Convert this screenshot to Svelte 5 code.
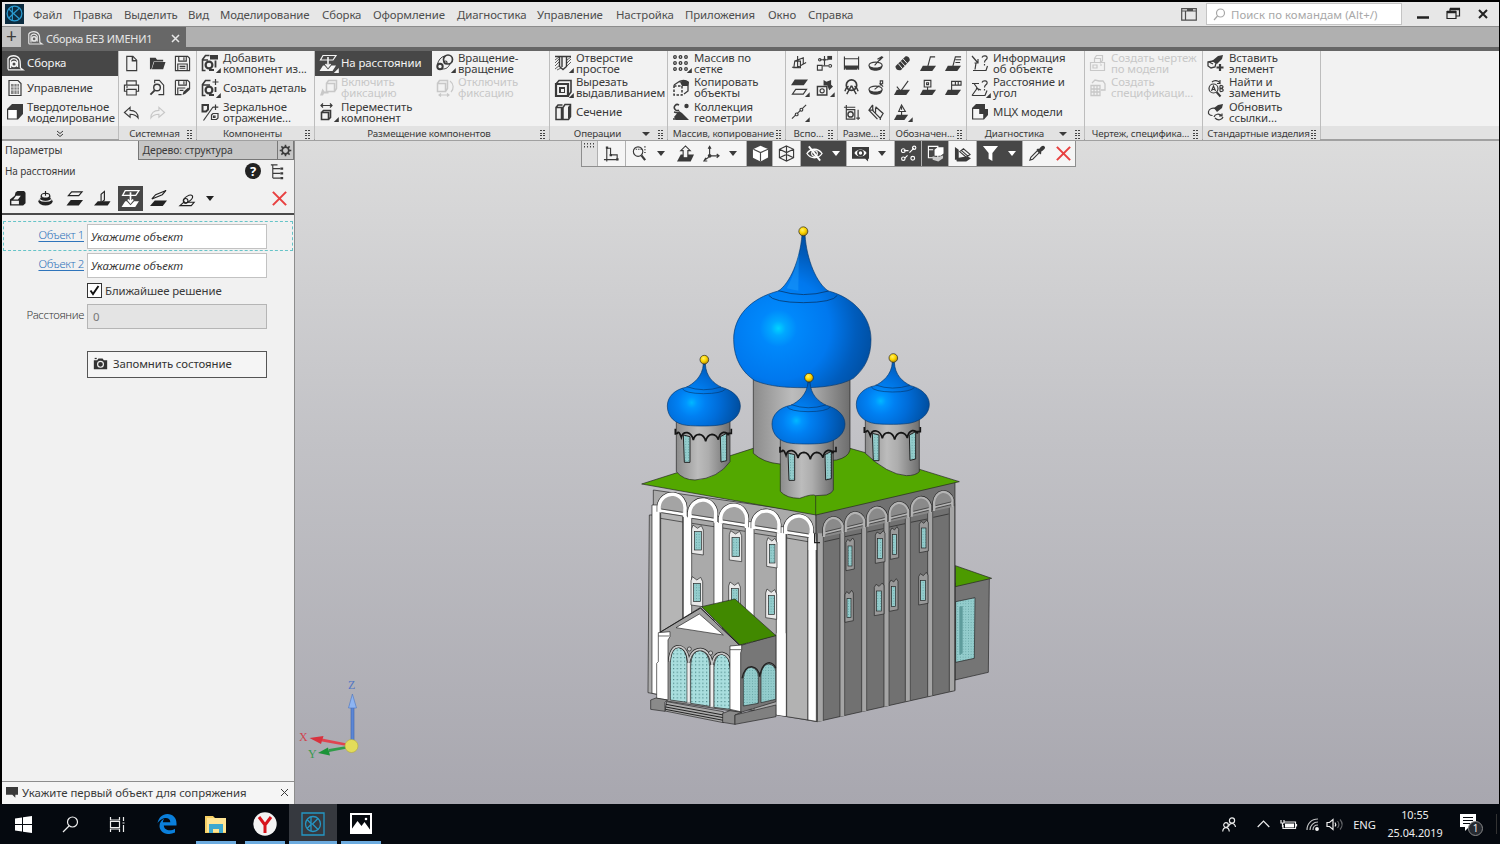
<script lang="ts">
	// толстая маленькая стрелка в углу иконки (есть вложенные команды)
	const more = '<path d="M19.8 14v5h-5z" fill="currentColor" stroke="none"/>';
	const f = 'fill="currentColor" stroke="none"';
	const distance = `<path d="M4 1.500h13L14 6H1.500z"/><path d="M9 3v9.500M6.500 10L9 13l2.500-3" stroke-width="1.600"/><path d="M4 11.500h1.500L9 15.500l3.500-4H17L13.500 17H.5z" ${f}/>`;

	const icons: Record<string, string> = {
		assembly: `<path d="M2 15.500V4.500C4 1 11 .5 13.500 5c1.500 3 .5 6 1 9l2.500 1.800H2" stroke-width="1.300"/><path d="M4.500 14V6.500C6 4 10 4 11.500 7v6" stroke-width="1.300"/><circle cx="8" cy="10" r="2.400" stroke-width="1.800"/>`,
		manage: `<path d="M3 1.500h9l3 3v12H3z"/><path d="M5 5h8v10H5z" ${f} opacity=".6"/><path d="M5 8h8M5 11h8M8 5v10M11 5v10" stroke="#eee" stroke-width=".8"/>`,
		solid: `<path d="M1 6l5-5h11v10l-5 5.500H1z" ${f}/><path d="M2.200 7h8.600v8.500H2.200z" fill="#fff" stroke="none"/>`,
		file: `<path d="M4 1.500h6.500l4 4v11H4z"/><path d="M10 1.500v4.500h4.500" stroke-width="1.600"/>`,
		open: `<path d="M1 15V3h6l1.500 2H15v2H5L2.500 15z" ${f}/><path d="M5.500 7.500H17.500L15 15H3z" ${f}/>`,
		save: `<path d="M1.500 1.500h13l2 2v13h-15z"/><path d="M5 1.500v5h8v-5M4 16.500v-7h10v7M10.500 2.500v3M6 12h6M6 14h6"/>`,
		saveas: `<path d="M1.500 1.500h13l2 2v7M8 16.500H1.500v-15"/><path d="M5 1.500v5h8v-5M4 16.500v-7h8M10.500 2.500v3M6 12h4"/><path d="M9 17l1-3.500 5-4.500 2 2-5 4.500z" ${f}/>`,
		print: `<path d="M4 6V2h10v4M4 13H1.500V6.500h15V13H14M4 11h10v6H4z"/><path d="M3.500 8.500h1.500" stroke-width="1.600"/>`,
		preview: `<path d="M6 4.500V1.500h5l4.500 5v10H10"/><circle cx="8.500" cy="9" r="3.500" stroke-width="1.500"/><path d="M6 12L1.500 16.500" stroke-width="2"/>`,
		undo: `<path d="M7.500 3.500L1.500 9l6 5v-3.200c4 0 6.500 1 8.500 4 0-5-3-8-8.500-8z"/>`,
		redo: `<path d="M10.500 3.500l6 5.500-6 5v-3.200c-4 0-6.500 1-8.500 4 0-5 3-8 8.500-8z"/>`,
		addcomp: `<path d="M4.500 16.500H1.500v-11l3-4h4M2 6h5" stroke-width="1.600"/><path d="M9 1h8v4.500H9z" ${f}/><circle cx="8" cy="11" r="3.400" stroke-width="2.200"/><path d="M8 16h5M14.500 6.500v7" stroke-width="1.800"/>${more}`,
		newpart: `<path d="M4.500 16.500H1.500v-11l3-4h5M2 6h7" stroke-width="1.600"/><path d="M14.500 0v6M11.500 3h6"/><circle cx="8" cy="11" r="3.400" stroke-width="2.200"/><path d="M8 16h5M14.500 8v5" stroke-width="1.800"/>${more}`,
		mirror: `<path d="M1.500 2h5.500v4.500l-2 2H1.500z" stroke-width="2"/><path d="M12 4L2.500 17.500"/><path d="M14.500 1.500v5.500M11.800 4.200h5.500"/><path d="M10.500 12l1.500-1.500h5V15l-1.500 1.500h-5zM12.500 13h1.500v1.500h-1.500z"/>`,
		distance,
		distanceMore: distance + more,
		fix: `<path d="M7.500 4.500h8v8h-8zM7.500 4.500l2-3h8v8l-2 3" stroke-width="1.500"/><path d="M1 16.500l2.500-7 2 3h4v2H5l-1 2z" ${f}/>`,
		unfix: `<path d="M1.500 4.500h8v8h-8zM1.500 4.500l2-3h8v8l-2 3" stroke-width="1.500"/><path d="M14 2c4 3 4 8 1 11M3 16h10M5 14.500l-2 1.500 2 1.500M11 14.500l2 1.500-2 1.500"/>`,
		move: `<path d="M2 2.500h11M4 .5l-2 2 2 2M11 .5l2 2-2 2"/><path d="M2.500 9.500h7v7h-7zM2.500 9.500l2-2h7v7l-2 2" stroke-width="1.600"/>${more}`,
		rotate: `<circle cx="12" cy="5.500" r="4.500" stroke-width="1.700"/><circle cx="4" cy="12.500" r="2.700" stroke-width="2"/><path d="M1.500 10C2.500 6 5 3 8.500 2M6 15c4 0 6-1 8-5" stroke-width="1"/><circle cx="9.500" cy="8.500" r="1.500"/>${more}`,
		hole: `<path d="M1 2.500h16M5.500 2.500v10l3.500 3 3.500-3v-10M8 3v10" stroke-width="1.400"/><path d="M1 6l4-3M1 9l4-4M1 12l4-4M1 15l5-4M3 16l4-2M13 6l4-3M13 9l4-4M13 12l4-4" stroke-width=".8"/>${more}`,
		cut: `<path d="M2 5h12v12H2z" stroke-width="2.200"/><path d="M2 5l3-3.500h12V13l-3 4" stroke-width="1.600"/><path d="M5 8h6v6H5z" ${f}/><path d="M7 10h3v3H7z" fill="#f2f2f2" stroke="none"/>${more}`,
		section: `<path d="M2 4.500h5.500v12H2zM2 4.500L4 2h4.500M9 4.500l2-3h5.500v12l-2 3H9z" stroke-width="1.500"/><path d="M14 4l2.500-2.500v12L14 16z" ${f}/>`,
		array: `${[3, 9, 15].map((y) => [3, 8.500, 14].map((x) => `<circle cx="${x}" cy="${y}" r="1.300" stroke-width="1.300"/>`).join('')).join('')}${more}`,
		copy: `<path d="M2 7h8v9H2z" stroke-dasharray="2.500 1.500" stroke-width="1.500"/><path d="M7 3c2-2 7-2 9 0v9l-4 3M2 6l6-4" stroke-width="1.300"/><path d="M8 3l4-2 5 2-1 4h-6z" ${f}/>`,
		collection: `<path d="M7 2a3 3 0 1 0 0 5" stroke-width="1.500"/><circle cx="14.500" cy="3" r="2.200" ${f}/><path d="M2 14l5-6 3 2 3 3 4 4H9l-5 0z" ${f}/><path d="M2 9l4 1M1 16h5" stroke-width="1.500"/>`,
		planes: `<path d="M4 6.500h6v7H3zM7 1v12M7 13l9-5M4 6.500L13 3v7M1 13h8" />`,
		nodes: `<path d="M1.500 11h5v5h-5zM4 5h9M9 1v10"/><path d="M12 1h5v4h-5z" ${f}/><circle cx="4" cy="5" r="1.300"/><circle cx="9" cy="5" r="1.300" ${f}/><circle cx="15" cy="11.500" r="1.500"/><path d="M7 11.500h6"/>`,
		plane: `<path d="M4 .5h14l-4.500 6H0z" ${f}/><path d="M5 11h11.500l-3.500 5H1.500z"/>${more}`,
		localcs: `<path d="M1.500 8h10v9h-10z" stroke-width="1.500"/><circle cx="6.500" cy="12.500" r="2.200"/><path d="M8 1l3 2 5-2v5l2 2-4 4-2-5H8z" ${f}/>${more}`,
		points: `<path d="M1 15.500L16 1"/><circle cx="6" cy="11" r="1.500" fill="#f2f2f2"/><circle cx="11" cy="6" r="1.500" fill="#f2f2f2"/>${more}`,
		dimlin: `<path d="M1.500 1.500v14M16.500 1.500v14M2 4h14"/><path d="M1 11h16l-2 4.500H3z" ${f}/>`,
		dimang: `<circle cx="9" cy="6.500" r="5.500" stroke-width="1.800"/><path d="M9 7L4 16M9 7l5 9M2 13c1-3 3-5 4-5M16 13c-1-3-3-5-4-5" stroke-width="1.500"/>`,
		dimarc: `<ellipse cx="8" cy="11" rx="7" ry="3.500"/><path d="M1 11c3 3 11 3 14 0v2c-1 5-13 5-14 0z" ${f}/><path d="M7 11l8-9M12 6l4-4M10 4.500l5-3"/>`,
		dimrad: `<ellipse cx="8" cy="11" rx="7" ry="3.500"/><path d="M1 11c3 3 11 3 14 0v2c-1 5-13 5-14 0z" ${f}/><path d="M7 11l5-4M13 7V2h2.500v3H13l3 3"/>`,
		dimbox: `<path d="M1 3.500h12M3.500 1v15h9V6h-9M16 6v11M14 15h4"/><circle cx="8" cy="11" r="2.800" stroke-width="1.500"/>`,
		dimcut: `<path d="M5 1L1 6.500l9 9.500M5 1v6l8 8 3-5-8-7M1 6.500h5M13 15v2M8 4v5" stroke-width="1.300"/>`,
		thread: `<path d="M1.500 12L12 1.500c2.500-1 5.500 2 4.500 4.500L7.500 16c-3.500 1-6-1-6-4z" ${f}/><path d="M4.500 9l4.500 5.500M7 6.500l4.500 5M9.500 4l4.500 5" stroke="#f2f2f2" stroke-width="1"/>`,
		rough: `<path d="M3 11.500h14l-4 5.500H0z" ${f}/><path d="M8 13l3-11h5"/>`,
		base: `<path d="M3 11.500h14l-4 5.500H0z" ${f}/><path d="M8 13l3-11h6M11 5h6M11 8h5"/>`,
		mark: `<path d="M3 11.500h14l-4 5.500H0z" ${f}/><path d="M3 8l4 5 8-11"/>`,
		flag: `<path d="M3 11.500h14l-4 5.500H0z" ${f}/><path d="M4.500 1.500h7v7h-7zM8 8v5M7 4h2v2H7z"/>`,
		tolerance: `<path d="M3 11.500h14l-4 5.500H0z" ${f}/><path d="M7 13V2.500h10v4H7M11 2.500v4M14 2.500v4"/>`,
		weld: `<path d="M3 11.500h12l-4 5.500H0z" ${f}/><path d="M8 1l4 7H5zM8 8v4M8 3v3"/>${more}`,
		info: `<path d="M4 15.500L5 9M2 16.500h13l1.500-4.500M1 2l6 7M7 5v4H3.500" /><path d="M11 3.500c1-2.500 6-2 5 1-.5 1.500-2.500 1.500-2.500 4M13.500 10v1.500"/>`,
		angle: `<path d="M1 16.500h13l2-5M1 16.500l5-7M1 4.500h7M3 4.500l5 7M5 9l5 2" /><path d="M11 3.500c1-2.500 6-2 5 1-.5 1.500-2.500 1.500-2.500 4M13.500 10v1.500"/>${more}`,
		mcx: `<path d="M1 5l4-4h9v5h3v6l-4 4.500H1z" ${f}/><path d="M2.200 6h6v5h4v4.500h-10z" fill="#f6f6f6" stroke="none"/>`,
		drawing: `<path d="M1.500 8.500h14v8h-14zM4 11h4v3H4zM11 11h2M5.500 8V4.500l2-3h6v5l-2 2v-4h-6"/>`,
		spec: `<path d="M2 6.500h9v10H2zM2 10h9M2 13h9M5 6v10M8 6v10M3 4l3-3 4 1M9 2h5l2 3v6h-4" stroke-width="1.300"/>`,
		insert: `<path d="M5 7l6-5 5-1-1 4-5 5z" ${f}/><path d="M1 8l5-1 3 2-1 4-4 1-3-2zM2 8l4 2" fill="#f2f2f2" stroke-width="1.300"/><path d="M13 10v7M9.500 13.500h7" stroke-width="2.200"/>`,
		find: `<path d="M5 3c2-2 6-2 8 1M13 1v3.500h-3"/><circle cx="6.500" cy="9.500" r="4.500"/><path d="M9.500 13l4 4.500" stroke-width="2"/><path d="M4.500 12l2-5 2 5M5 10.500h3M13 6.500v6M13 6.500c4-.5 4 3 0 3 4.500 0 4 3.500 0 3"/>`,
		update: `<path d="M7 5l4-3 5-1-1 4-5 4z" ${f}/><path d="M9 6C6 4 2 6 1.500 8.500s1 4 4 4"/><path d="M7 14c1-3 5-4 8-1M15 10.500V13h-3M16 14c-1 3-5 4-8 1"/>`,
		concentric: `<ellipse cx="9" cy="12" rx="7.500" ry="4.500" ${f}/><path d="M2.500 10c3 2.500 10 2.500 13 0" stroke="#f2f2f2"/><ellipse cx="9" cy="6" rx="4.500" ry="2.500" fill="#f2f2f2"/><path d="M4.500 6v3c2 2 7 2 9 0V6M9 1v5"/>`,
		coincide: `<path d="M1 10l5-4 1-3.500L9 1h7l1.500 2v11L15 16.500H1z" ${f}/><path d="M2.500 11.500h8v3.500h-8zM7.500 6h5l-3 4h-5z" fill="#f2f2f2" stroke="none"/>`,
		parallel: `<path d="M6 2h11l-3.500 4H2.500z"/><path d="M5 10.500h13L13.500 16.500H.5z" ${f}/>`,
		perpend: `<path d="M4 12h13.500l-3 4.500H0z" ${f}/><path d="M7.500 13.500v-9l3.500-3v9z" fill="#f2f2f2"/>`,
		tilt: `<path d="M5 11h13l-4.500 6H0z" ${f}/><path d="M2 9.500l4-4.500L17 .5l-4 4.500z"/>`,
		tangent: `<path d="M5 13h11l-3 3.500H1z"/><path d="M5 12c-1-4 7-8 9-6 2 3-4 7-7 8z" fill="#f2f2f2"/><circle cx="7" cy="11.500" r="2.500"/>`,
		sketch: `<path d="M4 3.500h4v7h7v5H4zM1 15.500h3v-13M4 15.500v2"/><path d="M3 1.500h2.500V4H3zM7 9.500h2.500V12H7zM14 14h2.500v2.500H14z" ${f}/>`,
		zoom: `<circle cx="7.500" cy="7" r="5"/><path d="M11 11l4 5" stroke-width="2.400"/><path d="M5 4.500h7M14 2h2M14 5h2M14 8h2" stroke-dasharray="1.500 1"/>`,
		normal: `<path d="M4 10h14l-3.500 7.500H0z" ${f}/><path d="M6.500 13.500V6H4l5-5 5 5h-2.500v7.500z" fill="#f5f5f5"/>`,
		axes: `<path d="M7 11V2M5.500 4L7 1.500 8.500 4M8 11.500h8M14.500 9.500l2.500 2-2.500 2M6 13l-5 3.500M3 13.500L1 17h3.500"/><circle cx="7" cy="11.500" r="2" ${f}/>`,
		cube: `<path d="M9 .8l8 3.500v9L9 17.500l-8-4v-9z" fill="#fff" stroke="none"/><path d="M1.500 4.500L9 8l8-3.500M9 8v9.500" stroke="#474747"/>`,
		cubewire: `<path d="M9 1l7.500 3.500v9L9 17l-7.500-3.500v-9zM1.500 4.500L9 8l7.500-3.500M9 8v9M9 1v9M1.500 13.500L9 10l7.500 3.500"/>`,
		eyeoff: `<path d="M1 9c4-6 12-6 16 0-4 6-12 6-16 0z" stroke-width="1.400"/><circle cx="9" cy="9" r="3"/><path d="M3 1.500L15 16.500" stroke-width="2"/>`,
		eyecam: `<path d="M0 2h18v12.500h-1v3l-3-3H0z" ${f}/><path d="M2.500 8.500c3-5 10-5 13 0-3 5-10 5-13 0z" fill="#fff" stroke="none"/><circle cx="9" cy="8.500" r="2.700" stroke-width="1.800"/>`,
		snap: `<path d="M5 14l3-3M10 8l5-5M4 6h5"/><circle cx="3.500" cy="6" r="2"/><circle cx="3.500" cy="14.500" r="1.800"/><circle cx="15" cy="3" r="1.800"/><circle cx="13.500" cy="14" r="2"/>`,
		solids: `<path d="M1.500 1.500h10v12h-10zM1.500 5h5"/><path d="M8 5l3-2.500h6.500V9l-3 2.500H8z" ${f}/><path d="M6 12l5 1 6-2v3l-5 3.500-6-2z" fill="#ccc" stroke="none"/>`,
		layers: `<path d="M1 16V2l4 3v9z" ${f}/><path d="M2 14l12-2 4 2-5 3.500H3z" ${f}/><path d="M6 7l4-3 7 6-4 3zM8 6l7 6" fill="#f5f5f5"/>`,
		funnel: `<path d="M1 1h16l-6 7.500V17l-4-2.500v-6z" ${f}/>`,
		pipette: `<path d="M2 16l1-3 7-7 2 2-7 7z"/><path d="M9 5l1-1 2 0c2-3 4-4 5.500-2.500S17 5 14 7v2l-1 1z" ${f}/>`,
		close: `<path d="M2 2l14 14M16 2L2 16" stroke="#e84040" stroke-width="2.200"/>`,
		tree: `<path d="M4 2v14M4 6h8M4 11h8M4 16h8M2 2h7"/><path d="M12 4.700h3v2.500h-3zM12 9.700h3v2.500h-3zM12 14.700h3v2.500h-3z" ${f}/>`,
		camera: `<path d="M1 5h4l1.500-2h5L13 5h4v11H1z" ${f}/><circle cx="9" cy="10" r="3.500" stroke="#f2f2f2" stroke-width="1.400"/><path d="M2 3h2.500" stroke-width="1.500"/>`,
		gear: `<circle cx="9" cy="9" r="4.600" stroke-width="2.400"/><path d="M9 1v3M9 14v3M1 9h3M14 9h3M3.300 3.300l2.200 2.200M12.500 12.500l2.200 2.200M14.700 3.300l-2.200 2.200M5.500 12.500l-2.200 2.200" stroke-width="2.200"/>`,
		hint: `<path d="M0 1.500h18v11.500h-4v4.500l-4.500-4.500H0z" ${f}/>`,
		kompas: `<circle cx="9" cy="9" r="7"/><path d="M7 2.500v13M13.500 4L8 9l5.500 5M3.500 4.500L8 9l-4.500 4.500" stroke-width="1.100"/>`
	};

	const menu = [
		{ name: 'Файл', w: 40 },
		{ name: 'Правка', w: 51 },
		{ name: 'Выделить', w: 64 },
		{ name: 'Вид', w: 32 },
		{ name: 'Моделирование', w: 102 },
		{ name: 'Сборка', w: 51 },
		{ name: 'Оформление', w: 84 },
		{ name: 'Диагностика', w: 80 },
		{ name: 'Управление', w: 79 },
		{ name: 'Настройка', w: 69 },
		{ name: 'Приложения', w: 83 },
		{ name: 'Окно', w: 40 },
		{ name: 'Справка', w: 60 }
	];

	const modes = [
		{ icon: 'assembly', text: ['Сборка'], active: true },
		{ icon: 'manage', text: ['Управление'] },
		{ icon: 'solid', text: ['Твердотельное', 'моделирование'] }
	];

	// кнопки в группе идут по строкам; small — только иконки
	const groups: any[] = [
		{ title: 'Системная', w: 78, small: true, items: ['file', 'open', 'save', 'print', 'preview', 'saveas', 'undo', 'redo'] },
		{
			title: 'Компоненты',
			w: 118,
			items: [
				{ icon: 'addcomp', text: ['Добавить', 'компонент из...'] },
				{ icon: 'newpart', text: ['Создать деталь'] },
				{ icon: 'mirror', text: ['Зеркальное', 'отражение...'] }
			]
		},
		{
			title: 'Размещение компонентов',
			w: 235,
			items: [
				{ icon: 'distanceMore', text: ['На расстоянии'], active: true },
				{ icon: 'rotate', text: ['Вращение-', 'вращение'] },
				{ icon: 'fix', text: ['Включить', 'фиксацию'], off: true },
				{ icon: 'unfix', text: ['Отключить', 'фиксацию'], off: true },
				{ icon: 'move', text: ['Переместить', 'компонент'] }
			]
		},
		{
			title: 'Операции',
			w: 118,
			drop: true,
			items: [
				{ icon: 'hole', text: ['Отверстие', 'простое'] },
				{ icon: 'cut', text: ['Вырезать', 'выдавливанием'] },
				{ icon: 'section', text: ['Сечение'] }
			]
		},
		{
			title: 'Массив, копирование',
			w: 118,
			items: [
				{ icon: 'array', text: ['Массив по', 'сетке'] },
				{ icon: 'copy', text: ['Копировать', 'объекты'] },
				{ icon: 'collection', text: ['Коллекция', 'геометрии'] }
			]
		},
		{ title: 'Вспо...', w: 52, small: true, items: ['planes', 'nodes', 'plane', 'localcs', 'points'] },
		{ title: 'Разме...', w: 52, small: true, items: ['dimlin', 'dimarc', 'dimang', 'dimrad', 'dimbox', 'dimcut'] },
		{ title: 'Обозначен...', w: 77, small: true, items: ['thread', 'rough', 'base', 'mark', 'flag', 'tolerance', 'weld'] },
		{
			title: 'Диагностика',
			w: 118,
			drop: true,
			items: [
				{ icon: 'info', text: ['Информация', 'об объекте'] },
				{ icon: 'angle', text: ['Расстояние и', 'угол'] },
				{ icon: 'mcx', text: ['МЦХ модели'] }
			]
		},
		{
			title: 'Чертеж, специфика...',
			w: 118,
			items: [
				{ icon: 'drawing', text: ['Создать чертеж', 'по модели'], off: true },
				{ icon: 'spec', text: ['Создать', 'спецификаци...'], off: true }
			]
		},
		{
			title: 'Стандартные изделия',
			w: 118,
			items: [
				{ icon: 'insert', text: ['Вставить', 'элемент'] },
				{ icon: 'find', text: ['Найти и', 'заменить'] },
				{ icon: 'update', text: ['Обновить', 'ссылки...'] }
			]
		}
	];

	const mates = ['coincide', 'concentric', 'parallel', 'perpend', 'distance', 'tilt', 'tangent'];

	const view = [
		{ icon: 'sketch', w: 28 },
		{ icon: 'zoom', w: 46, drop: true },
		{ icon: 'normal', w: 26, flat: true },
		{ icon: 'axes', w: 49, drop: true, flat: true },
		{ icon: 'cube', w: 26, dark: true },
		{ icon: 'cubewire', w: 28 },
		{ icon: 'eyeoff', w: 46, drop: true, dark: true },
		{ icon: 'eyecam', w: 48, drop: true },
		{ icon: 'snap', w: 27, dark: true },
		{ icon: 'solids', w: 27, dark: true },
		{ icon: 'layers', w: 28 },
		{ icon: 'funnel', w: 46, drop: true, dark: true },
		{ icon: 'pipette', w: 27 },
		{ icon: 'close', w: 26, flat: true }
	];

	let nearest = $state(true);

	// геометрия храма: фасадные арки, пилястры и окна
	const frontArches = [
		[96, 65],
		[188, 82],
		[281, 98],
		[378, 115],
		[475, 130]
	];
	const sideArches = [
		[580, 133],
		[645, 118],
		[711, 102],
		[777, 88],
		[843, 72],
		[910, 55]
	];
	const frontPilasters = [
		[36, 24, 105, 674],
		[130, 25, 125, 690],
		[222, 26, 140, 706],
		[316, 26, 155, 720],
		[409, 29, 170, 739],
		[504, 25, 190, 754]
	];
	const sidePilasters = [
		[532, 18, 190, 755],
		[600, 14, 178, 740],
		[665, 15, 162, 725],
		[732, 15, 148, 710],
		[796, 15, 132, 694],
		[863, 15, 116, 679],
		[928, 16, 100, 664]
	];
	const frontWindows = [
		[155, 165, 35, 85],
		[268, 182, 37, 88],
		[380, 203, 31, 86],
		[153, 320, 35, 85],
		[266, 336, 35, 85],
		[377, 357, 33, 86]
	];
	const sideWindows = [
		[618, 212, 25, 90],
		[706, 190, 29, 90],
		[751, 178, 25, 90],
		[838, 158, 27, 90],
		[615, 369, 25, 88],
		[703, 347, 29, 90],
		[748, 334, 26, 90],
		[836, 315, 28, 90]
	];
	const towers = [
		{ x: 0, y: 0, base: 'M109 600V755Q130 780 165 780Q235 775 270 725V600z' },
		{ x: 567, y: -5, base: 'M109 600V705Q175 768 232 772Q260 772 271 760V600z' },
		{ x: 314, y: 54, base: 'M107 600V760Q125 781 165 781Q205 766 213 773L245 771Q262 766 266 756V600z' }
	];
</script>

{#snippet icon(name: string, size = 18)}
	<svg class="icon" width={size} height={size} viewBox="0 0 18 18">{@html icons[name]}</svg>
{/snippet}

{#snippet button(item: any)}
	<div class="btn" class:active={item.active} class:off={item.off}>
		<span class="btn-icon">{@render icon(item.icon)}</span>
		<span class="btn-text">
			{#each item.text as line}<span>{line}</span>{/each}
		</span>
	</div>
{/snippet}

<div class="screen">
	<div class="app">
		<header class="menubar">
			<div class="logo">{@render icon('kompas', 19)}</div>
			<nav>
				{#each menu as m}<span style="width: {m.w}px">{m.name}</span>{/each}
			</nav>
			<svg class="icon layout" width="16" height="13" viewBox="0 0 16 13">
				<path d="M.7 .7h14.600v11.400H.7zM.7 3h14.600M4.500 3v9M6 1.800h6" />
			</svg>
			<div class="search">
				<svg class="icon" width="13" height="13" viewBox="0 0 13 13">
					<circle cx="7.500" cy="5" r="4" /><path d="M4.500 8L1 12" />
				</svg>
				<span>Поиск по командам (Alt+/)</span>
			</div>
			<svg class="icon win" width="76" height="14" viewBox="0 0 76 14">
				<path d="M1 10.500h12" stroke-width="2.500" />
				<path d="M31 4.500h9v7h-9zM34 4V2h9.500v7H40" /><path d="M31 5h9M34 2h10" stroke-width="2.400" />
				<path d="M63 3l8 8M71 3l-8 8" stroke-width="2" />
			</svg>
		</header>

		<div class="tabs">
			<div class="plus">+</div>
			<div class="tab">
				{@render icon('assembly', 16)}
				<span>Сборка БЕЗ ИМЕНИ1</span>
				<svg class="icon" width="9" height="9" viewBox="0 0 9 9"><path d="M1 1l7 7M8 1L1 8" stroke-width="1.500" /></svg>
			</div>
		</div>

		<div class="ribbon">
			<div class="modes">
				<div class="rows">
					{#each modes as m}{@render button(m)}{/each}
				</div>
				<div class="foot">
					<svg class="icon" width="8" height="8" viewBox="0 0 8 8"><path d="M1 1l3 2.500L7 1M1 4l3 2.500L7 4" stroke-width="1" /></svg>
				</div>
			</div>
			{#each groups as g}
				<section style="width: {g.w}px">
					{#if g.small}
						<div class="rows small" class:two={g.w < 60}>
							{#each g.items as name}
								<span class="cell" class:off={name === 'redo'}>{@render icon(name)}</span>
							{/each}
						</div>
					{:else}
						<div class="rows" class:wide={g.w > 200}>
							{#each g.items as item}{@render button(item)}{/each}
						</div>
					{/if}
					<div class="foot">
						<span class="title">{g.title}</span>
						{#if g.drop}<i class="arrow"></i>{/if}
						<i class="grip"></i>
					</div>
				</section>
			{/each}
			<div class="rest"><div class="foot"></div></div>
		</div>

		<div class="work">
			<aside>
				<div class="side-tabs">
					<span class="current">Параметры</span>
					<span class="other">Дерево: структура</span>
					<span class="gear">{@render icon('gear', 13)}</span>
				</div>
				<div class="heading">
					<span>На расстоянии</span>
					<span class="help">?</span>
					{@render icon('tree', 17)}
				</div>
				<div class="mates">
					{#each mates as m}
						<span class:active={m === 'distance'}>{@render icon(m, m === 'distance' ? 19 : 17)}</span>
					{/each}
					<i class="arrow"></i>
					<div class="cancel">{@render icon('close', 17)}</div>
				</div>

				<div class="form">
					<div class="line target">
						<a href="#obj1">Объект 1</a>
						<div class="field"><em>Укажите объект</em></div>
					</div>
					<div class="line">
						<a href="#obj2">Объект 2</a>
						<div class="field"><em>Укажите объект</em></div>
					</div>
					<!-- svelte-ignore a11y_click_events_have_key_events, a11y_no_static_element_interactions -->
					<div class="check" onclick={() => (nearest = !nearest)}>
						<span class="box">
							{#if nearest}
								<svg class="icon" width="11" height="11" viewBox="0 0 11 11"><path d="M1.500 5.500L4 9l5.500-8" stroke-width="1.900" /></svg>
							{/if}
						</span>
						<span>Ближайшее решение</span>
					</div>
					<div class="line dist">
						<span class="name">Расстояние</span>
						<div class="field disabled">0</div>
					</div>
					<div class="remember">
						{@render icon('camera', 15)}
						<span>Запомнить состояние</span>
					</div>
				</div>

				<div class="status">
					{@render icon('hint', 12)}
					<span>Укажите первый объект для сопряжения</span>
					<svg class="icon" width="9" height="9" viewBox="0 0 9 9"><path d="M1 1l7 7M8 1L1 8" stroke-width="1" /></svg>
				</div>
			</aside>

			<main>
				<svg class="scene" width="1204" height="662" viewBox="295 141 1204 662">
					<defs>
						<radialGradient id="big" gradientUnits="userSpaceOnUse" cx="415" cy="325" r="310">
							<stop offset="0" stop-color="#00d4ff" />
							<stop offset=".07" stop-color="#00a8ff" />
							<stop offset=".18" stop-color="#0088fb" />
							<stop offset=".5" stop-color="#0078ee" />
							<stop offset=".75" stop-color="#005cbc" />
							<stop offset="1" stop-color="#004a98" />
						</radialGradient>
						<radialGradient id="little" gradientUnits="userSpaceOnUse" cx="155" cy="548" r="165">
							<stop offset="0" stop-color="#00b8ff" />
							<stop offset=".1" stop-color="#0096ff" />
							<stop offset=".25" stop-color="#0080f2" />
							<stop offset=".5" stop-color="#006cd8" />
							<stop offset="1" stop-color="#00458e" />
						</radialGradient>
						<radialGradient id="gold" cx=".4" cy=".35" r=".65">
							<stop offset="0" stop-color="#fff06a" />
							<stop offset=".5" stop-color="#ffd800" />
							<stop offset="1" stop-color="#b89000" />
						</radialGradient>
						<linearGradient id="drum">
							<stop offset="0" stop-color="#8c8c8c" />
							<stop offset=".4" stop-color="#bcbcbc" />
							<stop offset=".6" stop-color="#adadad" />
							<stop offset="1" stop-color="#6e6e6e" />
						</linearGradient>
						<pattern id="glass" width="8" height="8" patternUnits="userSpaceOnUse">
							<rect width="8" height="8" fill="#93cccc" />
							<rect width="2.500" height="2.500" fill="#5d9c9c" />
						</pattern>
						<pattern id="glass-light" width="11" height="11" patternUnits="userSpaceOnUse">
							<rect width="11" height="11" fill="#a9dede" />
							<rect width="3.500" height="3.500" fill="#4f8a8a" />
						</pattern>
					</defs>

					<g transform="translate(640 470) scale(.33333)" stroke="#222" stroke-width="2">
						<!-- пристройка -->
						<path d="M945 340L1048 325L1045 607L945 630z" fill="#757575" />
						<path d="M947 395L1005 383L1003 565L947 577z" fill="url(#glass)" />
						<path d="M958 410L968 408V550L958 555z" fill="#5e9c9c" stroke="none" />
						<path d="M946 287L1055 325L946 350z" fill="#4c9a00" />

						<!-- западный фасад -->
						<path d="M28 135H40V60L528 130L532 755L24 668z" fill="#aaa" />
						<path d="M62 120L128 130V560L62 560z" fill="#b5b5b5" />
						<path d="M440 188L504 198V750L440 740z" fill="#b2b2b2" />
						<path d="M62 145L128 156M156 160L222 170M248 174L316 184M343 190L408 200M440 204L504 215" />
						{#each frontPilasters as [x, w, top, bottom]}
							<path d="M{x} {top}h{w}V{bottom}L{x} {bottom - 4}z" fill="#fff" />
						{/each}
						{#each frontArches as [cx, top]}
							<path d="M{cx - 39} {top + 60}V{top + 44}A39 41 0 0 1 {cx + 39} {top + 54}V{top + 74}" fill="#a4a4a4" stroke="#222" stroke-width="14" />
						{/each}
						{#each frontArches as [cx, top]}
							<path d="M{cx - 39} {top + 62}V{top + 44}A39 41 0 0 1 {cx + 39} {top + 54}V{top + 76}" fill="#a4a4a4" stroke="#fff" stroke-width="10.500" />
							<path d="M{cx - 36} {top + 57}L{cx + 36} {top + 68}" stroke="#fff" stroke-width="8" />
							<path d="M{cx - 32} {top + 63}L{cx + 32} {top + 73}M{cx - 32} {top + 52}L{cx + 32} {top + 62}" />
						{/each}
						{#each frontWindows as [x, y, w, h]}
							<path d="M{x} {y + 12}L{x + 4} {y}L{x + w / 2} {y + 10}L{x + w - 6} {y + 2}L{x + w} {y + 15}V{y + h + 5}L{x} {y + h}z" fill="#e9e9e9" />
							<rect x={x + 8} y={y + 20} width={w - 14} height={h - 30} fill="url(#glass)" />
						{/each}

						<!-- боковой фасад -->
						<path d="M528 130L945 35V662L532 755z" fill="#717171" />
						<path d="M553 215L598 205M615 200L664 190M682 186L730 176M748 171L795 161M812 157L862 147M880 142L926 132" />
						{#each sidePilasters as [x, w, top, bottom]}
							<path d="M{x} {top}h{w}V{bottom - 3}L{x} {bottom}z" fill="#a5a5a5" stroke="none" />
							<path d="M{x} {top}V{bottom}" />
							<path d="M{x + w} {top}V{bottom - 3}" stroke="#333" />
						{/each}
						{#each sideArches as [cx, top]}
							<path d="M{cx - 28} {top + 66}V{top + 42}A29 36 0 0 1 {cx + 28} {top + 34}V{top + 54}" fill="#8a8a8a" stroke="#222" stroke-width="10" />
						{/each}
						{#each sideArches as [cx, top]}
							<path d="M{cx - 28} {top + 68}V{top + 42}A29 36 0 0 1 {cx + 28} {top + 34}V{top + 56}" fill="#8a8a8a" stroke="#b4b4b4" stroke-width="6.500" />
							<path d="M{cx - 27} {top + 57}L{cx + 27} {top + 44}" stroke="#b4b4b4" stroke-width="7" />
							<path d="M{cx - 23} {top + 52}L{cx + 23} {top + 41}M{cx - 23} {top + 60}L{cx + 23} {top + 49}" />
						{/each}
						<path d="M506 190V240H529V218L524 190z" fill="#fff" stroke="none" />
						<path d="M524 190V218H540" fill="none" stroke-width="4" />
						{#each sideWindows as [x, y, w, h]}
							<path d="M{x} {y + 5}L{x + 5} {y - 4}L{x + w / 2} {y + 2}L{x + w - 5} {y - 8}L{x + w} {y}V{y + h - 5}L{x} {y + h}z" fill="#999" />
							<rect x={x + 6} y={y + 16} width={w - 13} height={h - 30} fill="url(#glass)" />
						{/each}

						<!-- крыльцо -->
						<path d="M60 487L180 413L300 527L302 727L60 690z" fill="#a0a0a0" />
						<path d="M300 527L408 495V695L302 727z" fill="#777" />
						<path d="M108 473L178 432L250 495z" fill="#fff" />
						<path d="M185 410L285 387L408 497L300 525z" fill="#418900" />
						<path d="M60 487L182 414L298 525" fill="none" stroke-width="3" />
						<path d="M91 690V570Q92 532 117 532Q140 536 141 575V697z" fill="url(#glass-light)" />
						<path d="M152 700V585Q155 542 180 542Q208 546 209 590V709z" fill="url(#glass-light)" />
						<path d="M222 712V592Q226 552 246 552Q270 556 271 596V718z" fill="url(#glass-light)" />
						<path d="M88 575Q92 527 118 530Q143 534 146 578Q153 538 182 538Q211 542 216 585Q222 548 247 550Q272 555 274 596" fill="none" stroke-width="9" />
						<path d="M88 575Q92 527 118 530Q143 534 146 578Q153 538 182 538Q211 542 216 585Q222 548 247 550Q272 555 274 596" fill="none" stroke="#c8c8c8" stroke-width="5" />
						<path d="M146 578V697M216 585V710" stroke="#eee" stroke-width="7" />
						<circle cx="148" cy="537" r="6" fill="#ccc" /><circle cx="212" cy="549" r="6" fill="#ccc" />
						<path d="M310 708V625Q314 592 334 592Q355 597 355 622V700z" fill="url(#glass)" />
						<path d="M363 698V615Q366 584 386 582Q406 585 407 605V688z" fill="url(#glass)" />
						<path d="M306 625Q314 589 335 590Q357 594 359 620Q366 580 388 578Q402 580 408 595" fill="none" stroke-width="4" />
						<path d="M55 488L90 485V500L84 510V690L50 685V580L55 575z" fill="#fff" />
						<path d="M270 528L305 525V540L302 548V725L270 718V545z" fill="#fff" />
						<path d="M55 498H88M270 539H304" />
						<path d="M80 695L250 725V758L75 723z" fill="#aaa" />
						<path d="M78 703L250 735M77 711L250 743M76 718L250 751" stroke-width="3" />
						<path d="M32 690L48 684L82 690L75 697V724L32 718z" fill="#8a8a8a" />
						<path d="M248 730L270 722L305 727L285 735V763L248 757z" fill="#8a8a8a" />
						<path d="M285 735L408 705V740L285 763z" fill="#808080" />
						<path d="M410 490h27V738L410 734z" fill="#fff" stroke="none" />
					</g>

					<g transform="translate(640 220) scale(.33333)" stroke="#222" stroke-width="2">
						<path d="M5 792L340 685L480 660L630 685L690 702L958 785L528 885z" fill="#53a800" />
						<path d="M527 822V885" />
						<path d="M340 470V700Q370 728 420 732L590 720Q625 712 630 690V470z" fill="url(#drum)" />
						<path d="M486 45C480 120 450 190 415 213C330 235 281 290 281 358C281 420 310 460 345 482C390 500 440 503 490 503C540 503 600 498 640 475C675 445 693 410 693 358C693 290 640 232 565 213C530 190 500 120 495 45z" fill="url(#big)" stroke="#06396f" />
						<path d="M477 90C470 140 455 180 440 205L475 212z" fill="#27a8ff" opacity=".35" stroke="none" />
						<path d="M415 212Q490 235 566 213M386 226Q400 247 490 248Q580 247 592 226" fill="none" stroke="#063a70" stroke-width="2.500" />
						<circle cx="490" cy="34" r="13.500" fill="url(#gold)" />
						{#each towers as t}
							<g transform="translate({t.x} {t.y})">
								<path d={t.base} fill="url(#drum)" />
								<path d="M130 645L150 650V727H133z" fill="url(#glass)" stroke-width="3" />
								<path d="M241 650L260 640V722L243 726z" fill="url(#glass)" stroke-width="3" />
								<path d="M106 626V644M104 640H112Q116 630 124 652Q128 636 142 638Q156 642 160 660Q164 643 178 643Q193 645 197 664Q201 645 216 643Q230 644 235 659Q238 640 250 637Q262 636 266 646M262 640H274V626" fill="none" stroke="#151515" stroke-width="5" />
								<path d="M190 432C188 470 160 492 138 502C105 508 82 530 82 558C82 590 105 612 140 616C170 619 220 619 245 614C280 606 301 585 301 558C301 530 275 510 245 502C220 490 198 470 196 432z" fill="url(#little)" stroke="#06396f" />
								<path d="M140 500Q190 518 243 501M127 506Q135 520 190 521Q245 521 257 507" fill="none" stroke="#063a70" />
								<circle cx="193" cy="419" r="13" fill="url(#gold)" />
							</g>
						{/each}
					</g>

					<g class="axes">
						<path d="M351 742V707h3v35z" fill="#5b86d6" stroke="#3f64ad" stroke-width=".6" />
						<path d="M352.400 694L356.500 708H348.500z" fill="#8db4f2" stroke="#4a73c0" stroke-width=".6" />
						<path d="M347 743.500L322 738.500V741.500L347 746z" fill="#e04450" />
						<path d="M309.500 738L323.500 736L321 744z" fill="#d8323e" />
						<path d="M347 746L329 749V752L347 748.500z" fill="#2f9c48" />
						<path d="M318 753L328 747.500L330 755.500z" fill="#1c9338" />
						<circle cx="351.500" cy="746" r="6.500" fill="#e3dc5a" stroke="#b7ad35" stroke-width=".6" />
						<text x="348" y="689" fill="#5477c4">Z</text>
						<text x="299" y="741" fill="#d04550">X</text>
						<text x="308" y="758" fill="#3a9a50">Y</text>
					</g>
				</svg>

				<div class="viewbar">
					<span class="dots"></span>
					{#each view as v}
						<span class="tool" class:dark={v.dark} class:flat={v.flat} style="width: {v.w}px">
							<span class="tool-icon">{@render icon(v.icon, 17)}</span>
							{#if v.drop}<i class="arrow"></i>{/if}
						</span>
					{/each}
				</div>
			</main>
		</div>
	</div>

	<footer class="taskbar">
		<div class="task">
			<svg width="17" height="17" viewBox="0 0 17 17" fill="#fff"><path d="M0 2.500l7-1V8H0zM8 1.300L17 0v8H8zM0 9h7v6.500l-7-1zM8 9h9v8l-9-1.300z" /></svg>
		</div>
		<div class="task">
			<svg class="icon" width="17" height="17" viewBox="0 0 17 17"><circle cx="10.500" cy="6" r="5" /><path d="M7 10L1 16" /></svg>
		</div>
		<div class="task">
			<svg class="icon" width="17" height="17" viewBox="0 0 17 17"><path d="M1.500 1v3h9V1M1.500 5.500h9v6h-9zM1.500 16v-3h9v3M14.500 1v4M14.500 9v7M13.500 7h2" /></svg>
		</div>
		<div class="task edge">
			<svg width="20" height="20" viewBox="0 0 20 20"><path d="M.5 9.500C1.500 3.500 5.500 0 10.300 0c5.700 0 9.200 4 9.200 9.200v2.300H6.800c.2 5 6.700 6 11.200 3.200v3.800c-8.500 4-15.500-.5-15.500-6.500 0-3.500 2-6.300 5-7.500-1 1-1.500 2.300-1.600 3.700h7.400c0-5-5.500-5-8.600-3C2.500 6.300 1.200 7.800.5 9.500z" fill="#0a7fdb" /></svg>
		</div>
		<div class="task run">
			<svg width="22" height="19" viewBox="0 0 22 19"><path d="M0 1h8l2 2h11v15H0z" fill="#f6cf63" /><path d="M2 3h19v14H2z" fill="#ffe594" /><path d="M4 9h14v9h-4v-4H8v4H4z" fill="#3da8cf" /></svg>
		</div>
		<div class="task run">
			<svg width="24" height="24" viewBox="0 0 24 24"><circle cx="12" cy="12" r="11.700" fill="#f3f3f3" /><path d="M6 5l6 8 6-8M12 13v8" fill="none" stroke="#d8141c" stroke-width="3" /></svg>
		</div>
		<div class="task run now">
			<svg width="24" height="24" viewBox="0 0 24 24" fill="none" stroke="#2596c4" stroke-width="1.300"><path d="M1 1h22v22H1z" /><circle cx="12" cy="12" r="7.500" /><path d="M10 5v14M17 6.500L11.500 12l5.500 5.500M6 7.500l4.500 4.500L6 16.500" /></svg>
		</div>
		<div class="task run">
			<svg width="22" height="22" viewBox="0 0 22 22"><path d="M1 1h20v19H1z" fill="#05090f" stroke="#fff" stroke-width="2" /><path d="M1 17l6.500-9 4 5 3-4L21 18v2H1z" fill="#fff" /><circle cx="16" cy="6" r="1.300" fill="#fff" /></svg>
		</div>

		<div class="tray">
			<svg class="icon" width="14" height="15" viewBox="0 0 14 15"><circle cx="10" cy="3.500" r="2.600" /><path d="M6.500 9.500C7 7 8.500 6.500 10 6.500s3 1 3.500 3.500" /><circle cx="4" cy="8" r="2.300" /><path d="M.7 14.500C1 12 2 10.700 4 10.700S7 12 7.300 14.500" /></svg>
			<svg class="icon" width="13" height="8" viewBox="0 0 13 8"><path d="M.7 7L6.500 1l5.800 6" /></svg>
			<svg class="icon" width="17" height="11" viewBox="0 0 17 11"><path d="M4 3h11.500v6.500H3V6" stroke-width="1.200" /><path d="M5 4.500h9V8.500H5z" fill="#fff" stroke="none" /><path d="M16.500 5v2.500M1 1v3h3V1M2.500 4v4" /></svg>
			<svg class="icon" width="13" height="13" viewBox="0 0 13 13"><path d="M1 12C1 5.500 5.500 1 12 1M4 12c0-4.500 3.500-8 8-8M7 12c0-3 2-5 5-5" opacity=".8" /><circle cx="11" cy="11" r="1.300" fill="#fff" /></svg>
			<svg class="icon" width="17" height="13" viewBox="0 0 17 13"><path d="M1 4.500h2.500L7 1.500v10L3.500 8.500H1z" /><path d="M9 4.500c1 1.300 1 2.700 0 4" /><path d="M11.500 3c2 2.500 2 4.500 0 7M14 1.500c3 3.500 3 6.500 0 10" opacity=".4" /></svg>
			<span class="lang">ENG</span>
			<div class="clock"><span>10:55</span><span>25.04.2019</span></div>
			<div class="note">
				<svg width="16" height="17" viewBox="0 0 16 17"><path d="M0 0h16v13H9l-4 4v-4H0z" fill="#fff" /><path d="M3 3.500h10M3 6.500h10M3 9.500h7" stroke="#05090f" /></svg>
				<b>1</b>
			</div>
		</div>
	</footer>
</div>

<style>
	:global(body) {
		overflow: hidden;
		background: #000;
	}

	.screen {
		width: 1500px;
		height: 844px;
		display: flex;
		flex-direction: column;
		background: #05090f;
		font-family: 'Noto Sans', 'Open Sans', sans-serif;
		font-size: 11.4px;
		letter-spacing: -0.1px;
		color: #3a3a3a;
		white-space: nowrap;
	}

	.screen * {
		box-sizing: border-box;
	}

	.icon {
		fill: none;
		stroke: currentColor;
		stroke-width: 1.2;
		overflow: visible;
		flex: none;
	}

	.arrow {
		border: 4.5px solid transparent;
		border-top: 5px solid currentColor;
		border-bottom: none;
	}

	.app {
		height: 804px;
		padding: 2px 1px 0 2px;
		background: #000;
		display: flex;
		flex-direction: column;
	}

	/* меню */
	.menubar {
		height: 25px;
		background: #e7e7e7;
		display: flex;
		align-items: center;
		color: #4e4e4e;
		border-bottom: 1px solid #8c8c8c;
	}

	.logo {
		width: 19px;
		height: 20px;
		margin: 0 9px 0 3px;
		background: #0c2c40;
		color: #2b9bd0;
	}

	nav {
		display: flex;
		width: 1148px;
		padding-top: 1px;
	}

	.layout {
		margin-right: 9px;
	}

	.search {
		width: 196px;
		height: 22px;
		padding-left: 6px;
		display: flex;
		align-items: center;
		gap: 5px;
		background: #fff;
		border: 1px solid #c4c4c4;
		color: #a8a8a8;
	}

	.search span {
		letter-spacing: 0.06px;
	}

	.win {
		margin-left: 14px;
		color: #222;
	}

	/* вкладки документов */
	.tabs {
		height: 24px;
		display: flex;
		background: #b0b0b0;
		border-bottom: 4px solid #666;
	}

	.plus {
		width: 19px;
		background: #c3c3c3;
		text-align: center;
		font-size: 19px;
		line-height: 18px;
	}

	.tab {
		width: 165px;
		padding: 0 6px 0 6px;
		height: 22px;
		background: #676767;
		color: #e8e8e8;
		display: flex;
		align-items: center;
		gap: 3px;
		font-size: 10.9px;
	}

	.tab span {
		flex: 1;
		letter-spacing: -0.2px;
	}

	/* лента */
	.ribbon {
		height: 90px;
		display: flex;
		background: #f2f2f2;
		border-bottom: 2px solid #a0a0a0;
	}

	.ribbon section,
	.modes {
		display: flex;
		flex-direction: column;
		border-right: 1px solid #bdbdbd;
		flex: none;
	}

	.modes {
		width: 117px;
	}

	.rows {
		height: 75px;
		flex: none;
		display: grid;
		grid-template-columns: 1fr;
		grid-template-rows: repeat(3, 24.5px);
	}

	.rows.wide {
		grid-template-columns: 117px 117px;
	}

	.rows.small {
		grid-template-columns: repeat(3, 25.5px);
	}

	.rows.two {
		grid-template-columns: 26px 25px;
	}

	.cell {
		display: grid;
		place-items: center;
	}

	.cell .icon {
		width: 17px;
		height: 17px;
	}

	.btn {
		display: flex;
		align-items: center;
	}

	.btn-icon {
		width: 26px;
		display: grid;
		place-items: center;
		flex: none;
	}

	.modes .btn-icon {
		width: 25px;
	}

	.btn-text {
		display: flex;
		flex-direction: column;
		line-height: 11px;
		margin-top: -1px;
	}

	.btn.active {
		background: #474747;
		color: #f4f4f4;
	}

	.off {
		color: #c8c8c8;
	}

	.foot {
		flex: 1;
		background: #e2e2e2;
		display: flex;
		align-items: center;
		padding: 2px 4px 0 3px;
		font-size: 9.8px;
		line-height: 12px;
	}

	.modes .foot {
		justify-content: center;
	}

	.foot .title {
		flex: 1;
		text-align: center;
		letter-spacing: -0.13px;
	}

	.foot .arrow {
		border-width: 4px;
		border-top-width: 4.5px;
		border-bottom: none;
		margin-right: 8px;
	}

	.grip {
		width: 5px;
		height: 9px;
		background: repeating-linear-gradient(to bottom, #444 0 1.3px, transparent 1.3px 2.6px);
		mask: linear-gradient(to right, #000 0 2px, transparent 2px 3px, #000 3px);
	}

	.rest {
		flex: 1;
		display: flex;
		flex-direction: column;
		padding-top: 75px;
	}

	/* панель параметров */
	.work {
		flex: 1;
		min-height: 0;
		display: flex;
	}

	aside {
		width: 293px;
		background: #f1f1f1;
		border-right: 1px solid #8d8d8d;
		display: flex;
		flex-direction: column;
		flex: none;
	}

	.side-tabs {
		height: 19px;
		display: flex;
		font-size: 10.4px;
		line-height: 19px;
	}

	.current {
		width: 136px;
		padding-left: 3px;
	}

	.other,
	.gear {
		background: #c6c6c6;
		border: 1px solid #777;
		border-top: none;
	}

	.other {
		width: 141px;
		padding-left: 4px;
	}

	.gear {
		width: 16px;
		border-left: none;
		display: grid;
		place-items: center;
	}

	.heading {
		height: 22px;
		padding: 0 8px 0 3px;
		display: flex;
		align-items: center;
		font-size: 10px;
	}

	.heading > span:first-child {
		flex: 1;
	}

	.help {
		width: 16px;
		height: 16px;
		margin-right: 8px;
		border-radius: 50%;
		background: #222;
		color: #fff;
		font-weight: bold;
		font-size: 13px;
		line-height: 16px;
		text-align: center;
	}

	.mates {
		height: 33px;
		padding: 1px 0 0 1px;
		display: flex;
		align-items: center;
		border-bottom: 2px solid #4a4a4a;
		color: #222;
	}

	.mates > span {
		width: 28.5px;
		height: 25px;
		display: grid;
		place-items: center;
	}

	.mates > .active {
		width: 25px;
		margin: 0 1.5px 0 1px;
		background: #474747;
		color: #fff;
	}

	.mates .arrow {
		margin-left: 4px;
	}

	.cancel {
		margin-left: auto;
		margin-right: 6px;
		height: 17px;
	}

	.form {
		flex: 1;
		padding: 6px 1px 0 1px;
	}

	.line {
		height: 30px;
		display: flex;
		align-items: center;
		font-weight: 300;
	}

	.line.target {
		border: 1px dashed #66c4c8;
	}

	.line.target > a {
		width: 80px;
	}

	.line > a,
	.line > .name {
		width: 81px;
		margin-right: 3px;
		text-align: right;
		font-size: 11.4px;
		letter-spacing: -0.35px;
		padding-bottom: 4px;
	}

	.line > a {
		color: #2f74bb;
		text-underline-offset: 2px;
	}

	.field {
		width: 180px;
		height: 25px;
		padding-left: 3px;
		background: #fff;
		border: 1px solid #c2c2c2;
		font-weight: 400;
		line-height: 23px;
		font-size: 11.4px;
		letter-spacing: -0.1px;
	}

	.line:not(.target) {
		height: 28px;
	}

	.disabled {
		background: #e4e4e4;
		border-color: #b5b5b5;
		color: #777;
		padding-left: 5px;
	}

	.check {
		height: 23px;
		padding-left: 84px;
		display: flex;
		align-items: center;
		gap: 3px;
	}

	.box {
		width: 15px;
		height: 15px;
		border: 1px solid #333;
		background: #fff;
		display: grid;
		place-items: center;
		color: #111;
	}

	.remember {
		width: 180px;
		height: 27px;
		margin: 21px 0 0 84px;
		padding: 0 0 2px 5px;
		display: flex;
		align-items: center;
		gap: 5px;
		border: 1px solid #555;
		background: #f5f5f5;
		color: #333;
	}

	.status {
		height: 23px;
		border-top: 1px solid #8d8d8d;
		display: flex;
		align-items: center;
		padding: 0 5px 2px 4px;
		gap: 4px;
		background: #f5f5f5;
	}

	.status span {
		flex: 1;
		letter-spacing: -0.06px;
	}

	/* окно модели */
	main {
		position: relative;
		width: 1204px;
		background: linear-gradient(#dcdcdc, #c2c2c6 45%, #a8a7af);
	}

	.scene {
		display: block;
	}

	.axes text {
		font: 12px 'Liberation Serif', serif;
	}

	.viewbar {
		position: absolute;
		left: 286px;
		top: 0;
		height: 26px;
		display: flex;
		background: #f5f5f5;
		border: 1px solid #8e8e8e;
		border-top: none;
	}

	.dots {
		width: 15px;
		background: repeating-linear-gradient(to right, #444 0 1.5px, transparent 1.5px 3px) 2px 2px / 11px 1.5px no-repeat,
			repeating-linear-gradient(to right, #444 0 1.5px, transparent 1.5px 3px) 2px 5px / 11px 1.5px no-repeat, #e0e0e0;
	}

	.tool {
		display: flex;
		align-items: center;
		border-left: 1px solid #b0b0b0;
		background: #f5f5f5;
	}

	.tool.flat {
		border-left-color: transparent;
	}

	.tool.dark {
		background: #474747;
		color: #fff;
	}

	.tool-icon {
		width: 26px;
		display: grid;
		place-items: center;
		flex: none;
	}

	.tool .arrow {
		margin-left: 5px;
	}

	/* панель задач */
	.taskbar {
		height: 40px;
		display: flex;
		color: #eee;
		background: #05090f;
		letter-spacing: 0;
	}

	.task {
		width: 47px;
		display: grid;
		place-items: center;
		flex: none;
		border-bottom: 3px solid transparent;
		padding-top: 3px;
	}

	.task.edge {
		width: 51px;
		margin-right: 3px;
	}

	.task.run {
		width: 40px;
		margin: 0 8.5px 0 0;
		border-color: #6cabdf;
	}

	.task.run.now {
		width: 48px;
		margin: 0 4px 0 -4px;
		background: #36393f;
	}

	.task.edge + .run {
		margin-left: 1px;
	}

	.tray {
		margin-left: auto;
		display: flex;
		align-items: center;
		font-size: 11.2px;
		padding-right: 3px;
	}

	.tray > svg:nth-of-type(1) {
		margin-right: 21px;
	}

	.tray > svg:nth-of-type(2) {
		margin-right: 10px;
	}

	.tray > svg:nth-of-type(3) {
		margin-right: 9px;
	}

	.tray > svg:nth-of-type(4) {
		margin-right: 7px;
	}

	.tray > svg:nth-of-type(5) {
		margin-right: 10px;
	}

	.clock {
		width: 70px;
		margin-left: 4px;
		display: flex;
		flex-direction: column;
		align-items: center;
		font-size: 10.8px;
		line-height: 18px;
	}

	.note {
		position: relative;
		width: 37px;
		height: 20px;
		margin-left: 10px;
		border-right: 1px solid #333;
	}

	.note b {
		position: absolute;
		left: 8px;
		top: 7px;
		width: 15px;
		height: 15px;
		border: 1px solid #888;
		border-radius: 50%;
		background: #262a30;
		font-size: 10px;
		line-height: 13px;
		text-align: center;
		font-weight: 400;
	}
</style>
